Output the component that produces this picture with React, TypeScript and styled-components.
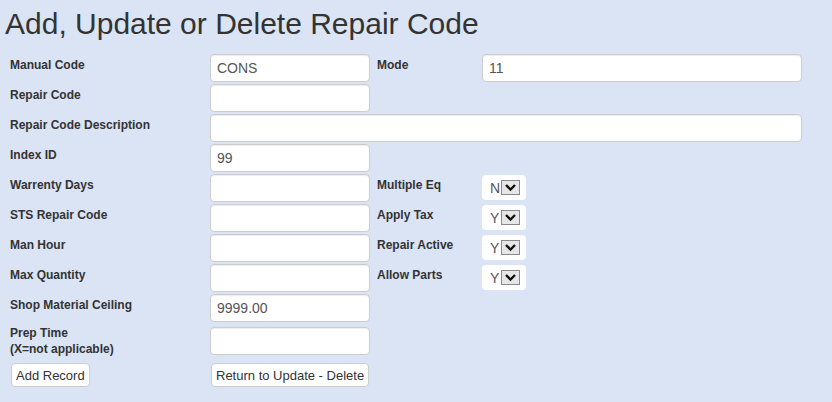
import React from "react";
import styled, { createGlobalStyle } from "styled-components";

const GlobalStyle = createGlobalStyle`
  html, body {
    margin: 0;
    padding: 0;
    background: #dae4f5;
    font-family: "Liberation Sans", Arial, sans-serif;
    color: #333;
  }
  * { box-sizing: border-box; }
`;

const Page = styled.div`
  width: 832px;
  min-height: 402px;
  background: #dae4f5;
`;

const Title = styled.h1`
  margin: 0;
  padding: 7px 0 0 5px;
  font-size: 30px;
  font-weight: normal;
  line-height: 33px;
  color: #333;
`;

const Form = styled.form`
  margin-top: 14px;
  padding-left: 10px;
  display: flex;
  flex-direction: column;
`;

const Row = styled.div<{ $tall?: boolean; $buttons?: boolean }>`
  display: grid;
  grid-template-columns: 200px 160px 7px 105px 320px;
  align-items: start;
  min-height: ${(p) => (p.$tall ? "32px" : "30px")};
  padding-top: ${(p) => (p.$buttons ? "6px" : "0")};
`;

const Label = styled.label<{ $col?: number; $tall?: boolean }>`
  grid-column: ${(p) => p.$col ?? 1};
  padding-top: ${(p) => (p.$tall ? "1px" : "3px")};
  font-size: 12px;
  font-weight: bold;
  line-height: 16px;
  color: #333;
`;

const TextInput = styled.input<{ $span?: string; $tall?: boolean }>`
  grid-column: ${(p) => p.$span ?? "2"};
  margin-top: ${(p) => (p.$tall ? "3px" : "0")};
  width: 100%;
  height: 28px;
  padding: 0 6px;
  border: 1px solid #ccc;
  border-radius: 4px;
  background: #fff;
  box-shadow: inset 0 1px 1px rgba(0, 0, 0, 0.075);
  font-family: "Liberation Sans", Arial, sans-serif;
  font-size: 14px;
  color: #555;
  outline: none;
`;

const SelectBox = styled.div`
  grid-column: 5;
  margin-top: 1px;
  width: 44px;
  height: 25px;
  display: flex;
  align-items: center;
  padding-left: 8px;
  gap: 3px;
  background: #fff;
  border-radius: 4px;
`;

const SelectValue = styled.span`
  font-size: 14px;
  color: #555;
  width: 8px;
`;

const ArrowBox = styled.span`
  width: 19px;
  height: 15px;
  display: flex;
  align-items: center;
  justify-content: center;
  background: #e6e6e6;
  border: 1px solid #8a8a8a;
`;

const Button = styled.button<{ $col?: number }>`
  grid-column: ${(p) => p.$col ?? 1};
  justify-self: start;
  margin-left: 1px;
  height: 24px;
  padding: 0 4px;
  background: #fff;
  border: 1px solid #ccc;
  border-radius: 4px;
  font-family: "Liberation Sans", Arial, sans-serif;
  font-size: 13px;
  color: #333;
  cursor: pointer;
`;

const Chevron = () => (
  <svg width="13" height="9" viewBox="0 0 13 9">
    <polyline points="2,2 6.5,6.5 11,2" fill="none" stroke="#111" strokeWidth="2.4" />
  </svg>
);

const Select = ({ value }: { value: string }) => (
  <SelectBox>
    <SelectValue>{value}</SelectValue>
    <ArrowBox>
      <Chevron />
    </ArrowBox>
  </SelectBox>
);

export default function App() {
  return (
    <Page>
      <GlobalStyle />
      <Title>Add, Update or Delete Repair Code</Title>
      <Form onSubmit={(e) => e.preventDefault()}>
        <Row>
          <Label>Manual Code</Label>
          <TextInput defaultValue="CONS" />
          <Label $col={4}>Mode</Label>
          <TextInput $span="5" defaultValue="11" />
        </Row>
        <Row>
          <Label>Repair Code</Label>
          <TextInput />
        </Row>
        <Row>
          <Label>Repair Code Description</Label>
          <TextInput $span="2 / 6" />
        </Row>
        <Row>
          <Label>Index ID</Label>
          <TextInput defaultValue="99" />
        </Row>
        <Row>
          <Label>Warrenty Days</Label>
          <TextInput />
          <Label $col={4}>Multiple Eq</Label>
          <Select value="N" />
        </Row>
        <Row>
          <Label>STS Repair Code</Label>
          <TextInput />
          <Label $col={4}>Apply Tax</Label>
          <Select value="Y" />
        </Row>
        <Row>
          <Label>Man Hour</Label>
          <TextInput />
          <Label $col={4}>Repair Active</Label>
          <Select value="Y" />
        </Row>
        <Row>
          <Label>Max Quantity</Label>
          <TextInput />
          <Label $col={4}>Allow Parts</Label>
          <Select value="Y" />
        </Row>
        <Row>
          <Label>Shop Material Ceiling</Label>
          <TextInput defaultValue="9999.00" />
        </Row>
        <Row $tall>
          <Label $tall>
            Prep Time
            <br />
            (X=not applicable)
          </Label>
          <TextInput $tall />
        </Row>
        <Row $buttons>
          <Button type="button">Add Record</Button>
          <Button type="button" $col={2}>
            Return to Update - Delete
          </Button>
        </Row>
      </Form>
    </Page>
  );
}
